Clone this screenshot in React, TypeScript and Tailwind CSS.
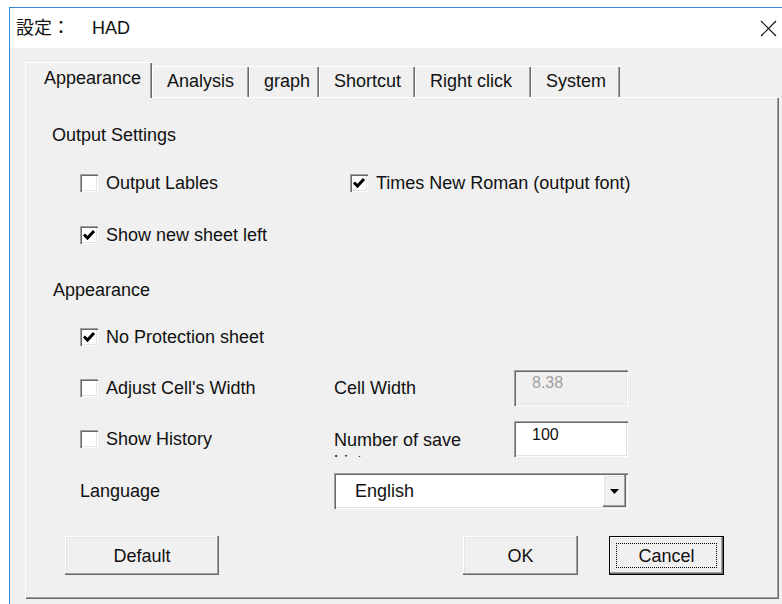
import React from 'react';

// classic 3D bevels
const raised =
  'shadow-[inset_-1px_-1px_0_#696969,inset_-2px_-2px_0_#a0a0a0,inset_1px_1px_0_#ffffff,inset_2px_2px_0_#e3e3e3]';
const sunken =
  'shadow-[inset_1px_1px_0_#a0a0a0,inset_2px_2px_0_#696969,inset_-1px_-1px_0_#ffffff,inset_-2px_-2px_0_#e3e3e3]';

const tabs = [
  { label: 'Appearance', width: 'w-[127px]', active: true },
  { label: 'Analysis', width: 'w-[97px]' },
  { label: 'graph', width: 'w-[70px]' },
  { label: 'Shortcut', width: 'w-[96px]' },
  { label: 'Right click', width: 'w-[116px]' },
  { label: 'System', width: 'w-[89px]' },
];

function CheckBox({ checked }: { checked?: boolean }) {
  return (
    <span className={`w-[18px] h-[18px] shrink-0 bg-white flex items-center justify-center ${sunken}`}>
      {checked && (
        <svg width="18" height="18" viewBox="0 0 18 18">
          <path d="M4 8.5 L7.5 12 L14 5" fill="none" stroke="#000" strokeWidth="3" />
        </svg>
      )}
    </span>
  );
}

function CheckOption({ label, checked }: { label: string; checked?: boolean }) {
  return (
    <label className="flex items-center gap-[8px] whitespace-nowrap">
      <CheckBox checked={checked} />
      <span>{label}</span>
    </label>
  );
}

function Button({ label, isDefault, width }: { label: string; isDefault?: boolean; width: string }) {
  if (isDefault) {
    return (
      <button className={`${width} h-[39px] border border-black bg-[#f0f0f0]`}>
        <div className={`h-full p-[6px] ${raised}`}>
          <div className="h-full border border-dotted border-black flex items-center justify-center">
            {label}
          </div>
        </div>
      </button>
    );
  }
  return (
    <button className={`${width} h-[39px] bg-[#f0f0f0] flex items-center justify-center ${raised}`}>
      {label}
    </button>
  );
}

export default function App() {
  return (
    <div className="w-[782px] h-[604px] overflow-hidden bg-white text-[#111] font-['Liberation_Sans','Noto_Sans_CJK_JP',sans-serif] text-[18px] leading-[22px]">
      <div className="ml-[9px] mt-[7px] h-[597px] flex flex-col border-l border-t border-[#3a86d9] bg-white">
        {/* Title bar */}
        <div className="h-[40px] shrink-0 flex items-center pl-[6px]">
          <span>設定：</span>
          <span className="ml-[22px]">HAD</span>
          <svg className="ml-auto mr-[5px]" width="17" height="17" viewBox="0 0 17 17">
            <path d="M1 1 L16 16 M16 1 L1 16" stroke="#111" strokeWidth="1.2" />
          </svg>
        </div>

        {/* Client area */}
        <div className="flex-1 bg-[#f0f0f0] pl-[15px] pt-[14px]">
          {/* Tab strip */}
          <div className="h-[35px] flex items-end">
            {tabs.map((t) =>
              t.active ? (
                <div
                  key={t.label}
                  className={`relative z-10 -mb-px h-[36px] ${t.width} flex items-center pl-[19px] pb-[5px] bg-[#f0f0f0] shadow-[inset_1px_1px_0_#ffffff,inset_-1px_0_0_#696969,inset_-2px_0_0_#a0a0a0]`}
                >
                  {t.label}
                </div>
              ) : (
                <div
                  key={t.label}
                  className={`h-[31px] ${t.width} flex items-center pl-[15px] pb-[2px] bg-[#f0f0f0] shadow-[inset_1px_1px_0_#ffffff,inset_-1px_0_0_#696969,inset_-2px_0_0_#a0a0a0]`}
                >
                  {t.label}
                </div>
              )
            )}
          </div>

          {/* Tab page */}
          <div className="w-[754px] h-[502px] flex flex-col pt-[20px] shadow-[inset_1px_1px_0_#ffffff,inset_-1px_-1px_0_#696969,inset_-2px_-2px_0_#a0a0a0]">
            <div className="h-[36px] flex items-center pl-[27px]">Output Settings</div>

            <div className="mt-[12px] h-[36px] flex items-center pl-[55px]">
              <div className="w-[254px]">
                <CheckOption label="Output Lables" />
              </div>
              <div className="pl-[16px]">
                <CheckOption label="Times New Roman (output font)" checked />
              </div>
            </div>

            <div className="mt-[16px] h-[36px] flex items-center pl-[55px]">
              <CheckOption label="Show new sheet left" checked />
            </div>

            <div className="mt-[19px] h-[36px] flex items-center pl-[28px]">Appearance</div>

            <div className="mt-[11px] h-[36px] flex items-center pl-[55px]">
              <CheckOption label="No Protection sheet" checked />
            </div>

            <div className="mt-[15px] h-[36px] flex items-center pl-[55px]">
              <div className="w-[254px]">
                <CheckOption label="Adjust Cell's Width" />
              </div>
              <div className="w-[180px]">Cell Width</div>
              <div className={`w-[114px] h-[36px] pl-[18px] pt-[3px] bg-[#f0f0f0] text-[16px] leading-[20px] text-[#a0a0a0] ${sunken}`}>
                8.38
              </div>
            </div>

            <div className="mt-[15px] h-[36px] flex items-center pl-[55px]">
              <div className="w-[254px]">
                <CheckOption label="Show History" />
              </div>
              {/* label box is too short for its second line, as in the original form */}
              <div className="w-[180px] self-start mt-[8px]">
                <div className="w-[170px] h-[28px] overflow-hidden">Number of save history</div>
              </div>
              <div className={`w-[114px] h-[36px] pl-[18px] pt-[4px] bg-white text-[16px] leading-[20px] ${sunken}`}>
                100
              </div>
            </div>

            <div className="mt-[16px] h-[36px] flex items-center pl-[55px]">
              <div className="w-[254px]">Language</div>
              <div className={`w-[294px] h-[36px] flex items-center bg-white pl-[21px] pr-[2px] ${sunken}`}>
                <span className="flex-1">English</span>
                <span className={`w-[23px] h-[32px] flex items-center justify-center bg-[#f0f0f0] ${raised}`}>
                  <svg width="9" height="5" viewBox="0 0 9 5">
                    <path d="M0 0 H9 L4.5 5 Z" fill="#000" />
                  </svg>
                </span>
              </div>
            </div>

            <div className="mt-[27px] flex items-center pl-[40px]">
              <Button label="Default" width="w-[154px]" />
              <div className="ml-[244px]">
                <Button label="OK" width="w-[115px]" />
              </div>
              <div className="ml-[31px]">
                <Button label="Cancel" width="w-[115px]" isDefault />
              </div>
            </div>
          </div>
        </div>
      </div>
    </div>
  );
}
